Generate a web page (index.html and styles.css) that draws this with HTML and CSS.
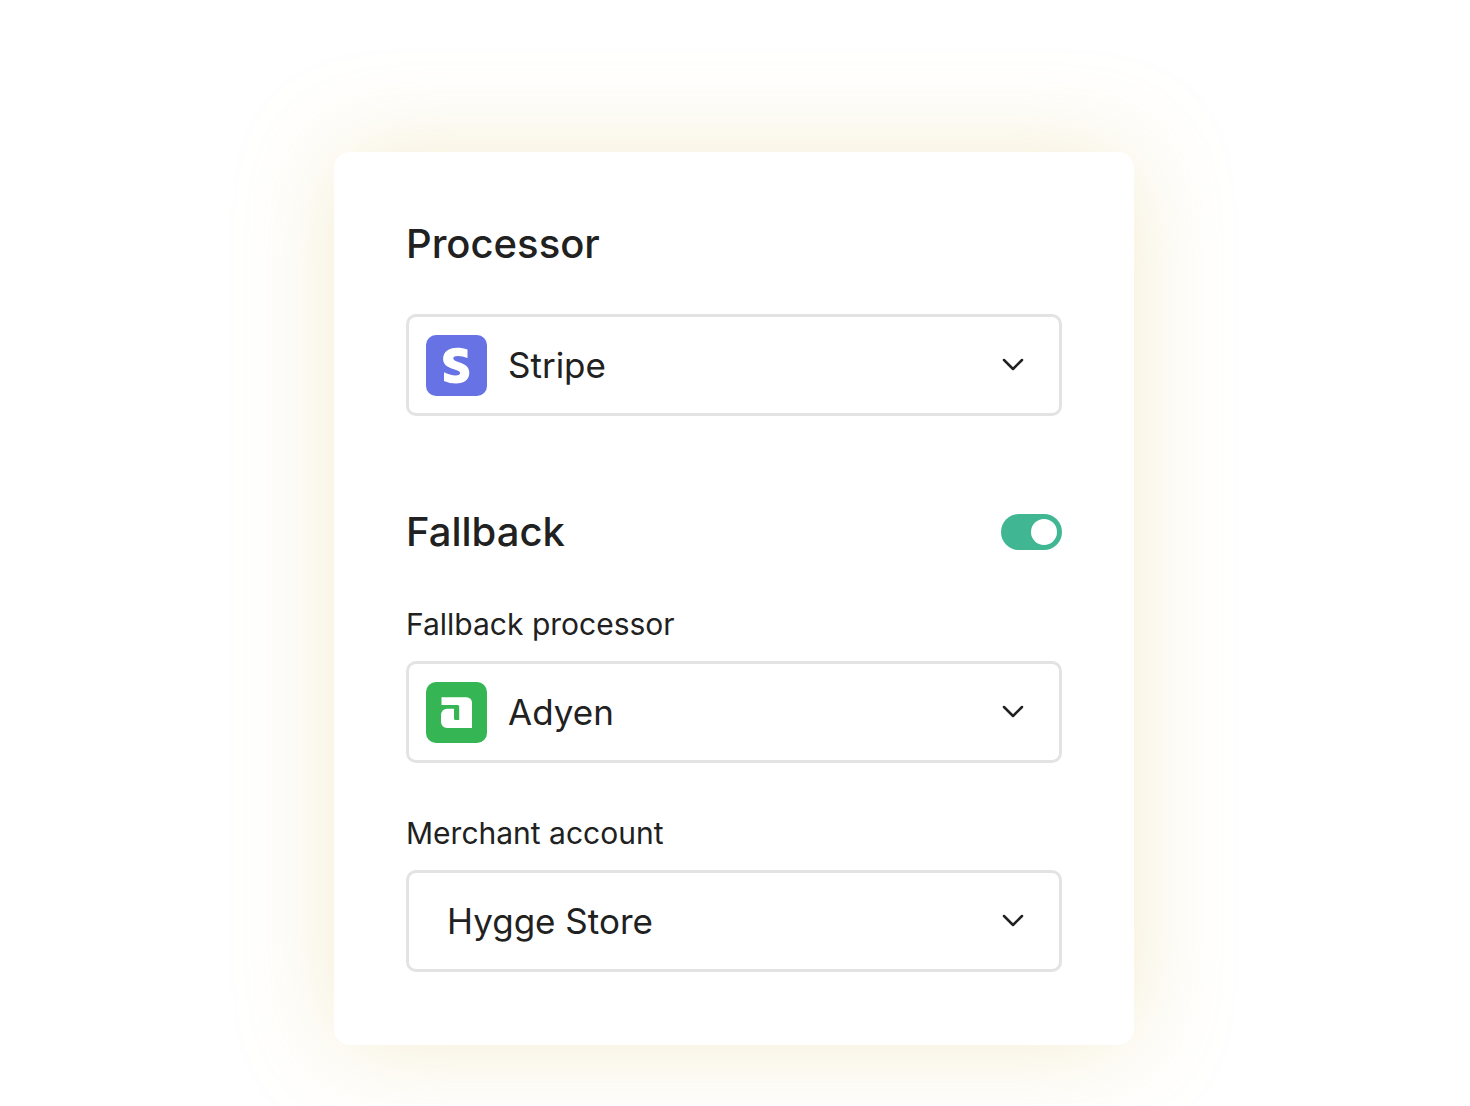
FILE: index.html
```html
<!DOCTYPE html>
<html lang="en">
<head>
  <meta charset="utf-8">
  <meta name="viewport" content="width=device-width, initial-scale=1">
  <title>Processor settings</title>
  <link rel="stylesheet" href="styles.css">
</head>
<body>
  <main class="page">
    <form class="card">
      <section class="section">
        <h2 class="heading"><label for="processor">Processor</label></h2>
        <div class="select">
          <svg class="select-logo" viewBox="0 0 61 61" aria-hidden="true">
            <rect width="61" height="61" rx="10" fill="#6772e5"/>
            <path fill="#fff" d="M41.500 14.500V23C38 21.700 35 20.900 31.800 20.900c-2.900 0-4.500 .8-4.500 2.400 0 5 16 3.200 16 14.200C43.300 45 38 48.500 30 48.500c-4.300 0-8.200-.8-12-2.500V37.300c3.800 1.900 8 3.200 11.800 3.200 2.700 0 4.300-.7 4.300-2.400 0-5-17-3-17-14.200 0-7 5.500-11.200 14-11.200 3.800 0 7 .5 10.400 1.800z"/>
          </svg>
          <select class="select-field select-field-logo" id="processor">
            <option>Stripe</option>
          </select>
          <svg class="select-arrow" viewBox="0 0 24 16" aria-hidden="true"><path d="M3 3l9 9 9-9"/></svg>
        </div>
      </section>

      <section class="section">
        <div class="heading-row">
          <h2 class="heading"><label for="fallback">Fallback</label></h2>
          <input class="toggle" type="checkbox" role="switch" id="fallback" checked>
        </div>
        <div class="fields">
          <div class="field">
            <label class="label" for="fallback-processor">Fallback processor</label>
            <div class="select">
              <svg class="select-logo" viewBox="0 0 61 61" aria-hidden="true">
                <rect width="61" height="61" rx="10" fill="#36b554"/>
                <path fill="#fff" d="M15.500 15.200H40.500a5.500 5.500 0 0 1 5.500 5.500V46H21a6 6 0 0 1-6-6V32.700a6 6 0 0 1 6-6h7V36.500a1.500 1.500 0 0 0 1.500 1.500h3.700V24.500a1.500 1.500 0 0 0-1.500-1.500H15.500z"/>
              </svg>
              <select class="select-field select-field-logo" id="fallback-processor">
                <option>Adyen</option>
              </select>
              <svg class="select-arrow" viewBox="0 0 24 16" aria-hidden="true"><path d="M3 3l9 9 9-9"/></svg>
            </div>
          </div>
          <div class="field">
            <label class="label" for="merchant">Merchant account</label>
            <div class="select">
              <select class="select-field" id="merchant">
                <option>Hygge Store</option>
              </select>
              <svg class="select-arrow" viewBox="0 0 24 16" aria-hidden="true"><path d="M3 3l9 9 9-9"/></svg>
            </div>
          </div>
        </div>
      </section>
    </form>
  </main>
</body>
</html>
```
FILE: styles.css
```css
*,
*::before {
  box-sizing: border-box;
}

body {
  margin: 0;
  background: #fff;
  color: #212121;
  font-family: Inter, "Liberation Sans", sans-serif;
}

.page {
  display: flex;
  justify-content: center;
  padding: 152px 26px 60px 24px;
}

.card {
  display: flex;
  flex-direction: column;
  gap: 92px;
  width: 100%;
  max-width: 800px;
  padding: 68px 72px 73px;
  border-radius: 16px;
  background: #fff;
  box-shadow: 0 0 100px rgba(214, 186, 84, 0.28);
}

.heading {
  margin: 0;
  font-size: 40px;
  font-weight: 500;
  line-height: 48px;
}

.section > .heading {
  margin-bottom: 46px;
}

.heading-row {
  display: flex;
  align-items: center;
  justify-content: space-between;
  margin-bottom: 50px;
}

.fields {
  display: flex;
  flex-direction: column;
  gap: 52px;
}

.field {
  display: flex;
  flex-direction: column;
  gap: 19px;
}

.label {
  font-size: 30px;
  line-height: 36px;
}

.select {
  display: grid;
  align-items: center;
}

.select > * {
  grid-area: 1 / 1;
}

.select-field {
  width: 100%;
  height: 102px;
  padding: 0 80px 0 38px;
  border: 3px solid #e3e3e3;
  border-radius: 10px;
  appearance: none;
  background: #fff;
  color: inherit;
  font: inherit;
  font-size: 35px;
}

.select-field-logo {
  padding-left: 99px;
}

.select-logo,
.select-arrow {
  z-index: 1;
  pointer-events: none;
}

.select-logo {
  width: 61px;
  height: 61px;
  margin-left: 20px;
}

.select-arrow {
  justify-self: end;
  width: 24px;
  height: 16px;
  margin-right: 37px;
  fill: none;
  stroke: #212121;
  stroke-width: 2.5;
  stroke-linecap: round;
  stroke-linejoin: round;
}

.toggle {
  display: flex;
  align-items: center;
  width: 61px;
  height: 36px;
  margin: 0;
  padding: 0 5px;
  border-radius: 18px;
  appearance: none;
  background: #bdbdbd;
}

.toggle::before {
  width: 26px;
  height: 26px;
  border-radius: 50%;
  background: #fff;
  content: "";
}

.toggle:checked {
  justify-content: flex-end;
  background: #40b692;
}
```
